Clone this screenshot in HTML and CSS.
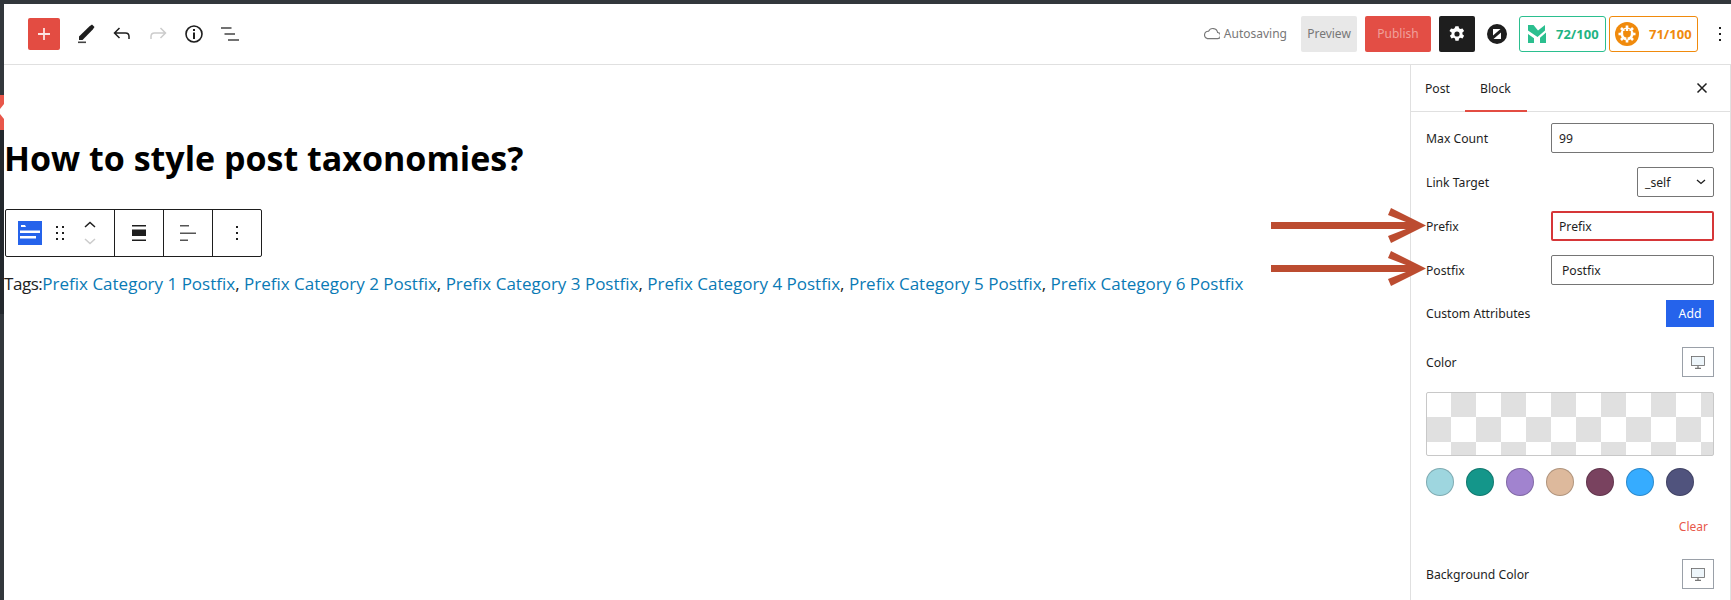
FILE: index.html
```html
<!DOCTYPE html>
<html lang="en">
<head>
<meta charset="UTF-8">
<meta name="viewport" content="width=device-width, initial-scale=1.0">
<title>How to style post taxonomies?</title>
<link rel="stylesheet" href="styles.css">
</head>
<body>

<!-- left admin rail bits that peek out next to the editor -->
<span class="rail-dark"></span>
<svg class="rail-mark" width="4" height="35" viewBox="0 0 4 35"><rect width="4" height="35" fill="#fff"/><path d="M0 0h4v9L0 14zM0 19l4 5v11H0z" fill="#e8574a"/></svg>

<div class="edit-frame">

  <header class="topbar">
    <div class="tools">
      <button class="add-btn" type="button">
        <svg width="16" height="16" viewBox="0 0 16 16"><path d="M8 2v12M2 8h12" stroke="#fbe4e2" stroke-width="1.8"/></svg>
      </button>
      <svg class="tool" width="24" height="24" viewBox="0 0 24 24"><path d="M5 14.500 15.500 4.200 18 2.500l2.500 2.400-1.700 2.600L8.500 18H5z" fill="#1e1e1e"/><path d="M4 20.300h8" stroke="#444" stroke-width="1.600"/></svg>
      <svg class="tool" width="24" height="24" viewBox="0 0 24 24"><path d="M9.500 6 4.500 11l5 5M5 11h10.500c2.300 0 3.500 1.500 3.500 3.600V17" fill="none" stroke="#1e1e1e" stroke-width="1.500"/></svg>
      <svg class="tool" width="24" height="24" viewBox="0 0 24 24"><path d="M14.500 6l5 5-5 5M19 11H8.500c-2.300 0-3.500 1.500-3.500 3.600V17" fill="none" stroke="#ccc" stroke-width="1.500"/></svg>
      <svg class="tool" width="24" height="24" viewBox="0 0 24 24"><circle cx="12" cy="12" r="8" fill="none" stroke="#1e1e1e" stroke-width="1.600"/><path d="M12 10.500V17" stroke="#1e1e1e" stroke-width="2"/><path d="M12 7v2" stroke="#1e1e1e" stroke-width="2"/></svg>
      <svg class="tool" width="24" height="24" viewBox="0 0 24 24"><path d="M3 6h10.500M6.500 12h10.500M10 18h11" stroke="#444" stroke-width="1.600"/></svg>
    </div>

    <div class="actions">
      <span class="autosave">
        <svg width="16" height="13" viewBox="1 2 14 11"><path d="M4 12h8.500a2.700 2.700 0 0 0 .4-5.400A4.200 4.200 0 0 0 5 5.500 3.300 3.300 0 0 0 4 12z" fill="none" stroke="#777" stroke-width="1"/></svg>
        Autosaving
      </span>
      <button class="preview-btn" type="button">Preview</button>
      <button class="publish-btn" type="button">Publish</button>
      <button class="settings-btn" type="button">
        <svg width="18" height="18" viewBox="0 0 16 16"><path fill-rule="evenodd" d="M6.600 1h2.800l.4 1.900 1.200.7 1.900-.6 1.400 2.400-1.500 1.300v1.500l1.500 1.300-1.400 2.400-1.900-.6-1.200.7-.4 1.900H6.600l-.4-1.900-1.200-.7-1.900.6-1.400-2.400 1.500-1.300V6.700L1.300 5.400 2.700 3l1.900.6 1.200-.7zM8 5.700a2.300 2.300 0 1 0 0 4.600 2.300 2.300 0 0 0 0-4.600z" fill="#fff"/></svg>
      </button>
      <svg class="zap" width="20" height="20" viewBox="0 0 20 20"><circle cx="10" cy="10" r="10" fill="#1e1e1e"/><path d="M6 5h7.500L6 11.500zM14 8.500V15H6.500z" fill="#fff"/></svg>
      <div class="score score-green">
        <svg width="18" height="20" viewBox="0 0 18 20"><path d="M0 1h5.500L10 6.500 17 1v5.500L9.500 13 0 6.500zM0 10l6 4.200V19H0zM18 8.500V19h-6v-5.200z" fill="#2bbf8f"/></svg>
        <span>72/100</span>
      </div>
      <div class="score score-orange">
        <svg width="24" height="24" viewBox="0 0 24 24"><circle cx="12" cy="12" r="12" fill="#f08a0c"/><path d="M12 3.500v4M12 16.500v4M3.500 12h4M16.500 12h4M6 6l3 3M15 15l3 3M18 6l-3 3M9 15l-3 3" stroke="#fff" stroke-width="2.600"/><circle cx="12" cy="12" r="6.500" fill="#fff"/><path d="M8.800 9.500h6.400v2.200a3.200 3.200 0 0 1-6.400 0zM10.200 7v2.500M13.800 7v2.500M12 14v3.500" fill="#f08a0c" stroke="#f08a0c" stroke-width="1.200"/></svg>
        <span>71/100</span>
      </div>
      <span class="more-dots"><i></i><i></i><i></i></span>
    </div>
  </header>

  <div class="workspace">
    <main class="canvas">
      <h1 class="post-title">How to style post taxonomies?</h1>

      <div class="block-toolbar">
        <div class="tb-group tb-first">
          <svg width="24" height="24" viewBox="0 0 24 24"><rect width="24" height="24" fill="#2563eb"/><path d="M3 4h4l1 2H3z" fill="#fff"/><rect x="2" y="9.500" width="20" height="2.500" fill="#fff"/><rect x="2" y="15" width="16" height="2.500" fill="#fff"/></svg>
          <svg class="drag" width="8" height="14" viewBox="0 0 8 14"><path d="M0 0h2v2H0zM6 0h2v2H6zM0 6h2v2H0zM6 6h2v2H6zM0 12h2v2H0zM6 12h2v2H6z" fill="#1e1e1e"/></svg>
          <svg class="mover" width="12" height="24" viewBox="0 0 12 24"><path d="M1 6l5-4.500L11 6" fill="none" stroke="#1e1e1e" stroke-width="1.500"/><path d="M1 18l5 4.500L11 18" fill="none" stroke="#ccc" stroke-width="1.500"/></svg>
        </div>
        <div class="tb-group tb-btn">
          <svg width="16" height="16" viewBox="0 0 16 16"><path d="M1 0h14v1.500H1zM1 4.500h14v6.500H1zM1 14.500h14V16H1z" fill="#1e1e1e"/></svg>
        </div>
        <div class="tb-group tb-btn">
          <svg width="16" height="16" viewBox="0 0 16 16"><path d="M0 0h9v1.500H0zM0 7.500h16V9H0zM0 14.500h8V16H0z" fill="#555"/></svg>
        </div>
        <div class="tb-group tb-last">
          <svg width="4" height="14" viewBox="0 0 4 14"><path d="M1 0h2v2H1zM1 6h2v2H1zM1 12h2v2H1z" fill="#1e1e1e"/></svg>
        </div>
      </div>

      <p class="tags"><span class="tags-label">Tags:</span><a href="#">Prefix Category 1 Postfix</a>, <a href="#">Prefix Category 2 Postfix</a>, <a href="#">Prefix Category 3 Postfix</a>, <a href="#">Prefix Category 4 Postfix</a>, <a href="#">Prefix Category 5 Postfix</a>, <a href="#">Prefix Category 6 Postfix</a></p>

      <!-- arrows drawn over the screenshot -->
      <svg class="note-arrow arrow-one" width="155" height="35" viewBox="0 0 155 35"><path d="M120 0l35 17.500L120 35l-3-7 18-7H0v-7h135L117 7z" fill="#bc4c30"/></svg>
      <svg class="note-arrow arrow-two" width="155" height="35" viewBox="0 0 155 35"><path d="M120 0l35 17.500L120 35l-3-7 18-7H0v-7h135L117 7z" fill="#bc4c30"/></svg>
    </main>

    <aside class="sidebar">
      <div class="side-tabs">
        <span class="tab">Post</span>
        <span class="tab active">Block</span>
        <svg class="close" width="12" height="12" viewBox="0 0 12 12"><path d="M1.500 1.500l9 9M10.500 1.500l-9 9" stroke="#1e1e1e" stroke-width="1.500"/></svg>
      </div>
      <div class="side-body">
        <div class="row">
          <label>Max Count</label>
          <input class="field" value="99">
        </div>
        <div class="row">
          <label>Link Target</label>
          <div class="select-box">_self
            <svg width="10" height="6" viewBox="0 0 10 6"><path d="M1 1l4 3.500L9 1" fill="none" stroke="#1e1e1e" stroke-width="1.300"/></svg>
          </div>
        </div>
        <div class="row">
          <label>Prefix</label>
          <input class="field field-red" value="Prefix">
        </div>
        <div class="row">
          <label>Postfix</label>
          <input class="field field-post" value="Postfix">
        </div>
        <div class="row attr-row">
          <label>Custom Attributes</label>
          <button class="add-attr" type="button">Add</button>
        </div>
        <div class="row color-head">
          <label>Color</label>
          <button class="device-btn" type="button">
            <svg width="14" height="13" viewBox="0 0 14 13"><rect x=".5" y=".5" width="13" height="9" fill="#eef6fb" stroke="#666" stroke-width=".8"/><path d="M7 10v2M4 12.300h6" stroke="#555"/></svg>
          </button>
        </div>
        <div class="checker"></div>
        <div class="swatches">
          <span class="dot dot1"></span>
          <span class="dot dot2"></span>
          <span class="dot dot3"></span>
          <span class="dot dot4"></span>
          <span class="dot dot5"></span>
          <span class="dot dot6"></span>
          <span class="dot dot7"></span>
        </div>
        <div class="clear-line"><a href="#">Clear</a></div>
        <div class="row bg-head">
          <label>Background Color</label>
          <button class="device-btn" type="button">
            <svg width="14" height="13" viewBox="0 0 14 13"><rect x=".5" y=".5" width="13" height="9" fill="#eef6fb" stroke="#666" stroke-width=".8"/><path d="M7 10v2M4 12.300h6" stroke="#555"/></svg>
          </button>
        </div>
      </div>
    </aside>
  </div>

</div>

</body>
</html>
```

FILE: styles.css
```css
* { box-sizing: border-box; }
html, body { margin:0; height:100%; overflow:hidden; }
body { background:#32373c; font-family:"Noto Sans", sans-serif; color:#1e1e1e; }

.rail-dark { position:absolute; left:0; top:130px; width:4px; height:184px; background:#23282d; }
.rail-mark { position:absolute; left:0; top:95px; display:block; }

.edit-frame { margin:4px 0 0 4px; height:596px; background:#fff; display:flex; flex-direction:column; }

/* top bar */
.topbar { height:61px; flex:none; display:flex; justify-content:space-between; align-items:center; border-bottom:1px solid #e0e0e0; padding:0 0 1px 24px; }
.tools { display:flex; align-items:center; }
.add-btn { width:32px; height:32px; border:none; border-radius:2px; background:#e34c42; padding:0; display:flex; align-items:center; justify-content:center; margin-right:14px; }
.tool { margin-right:12px; display:block; }
.actions { display:flex; align-items:center; }
.autosave { display:flex; align-items:center; gap:4px; font-size:12px; color:#777; margin-right:14px; }
.preview-btn { height:36px; width:56px; border:none; border-radius:2px; background:#e8e8e8; color:#777; font:12px "Noto Sans", sans-serif; padding:0; margin-right:8px; }
.publish-btn { height:36px; width:66px; border:none; border-radius:2px; background:#e34e45; color:#f0a09b; font:12px "Noto Sans", sans-serif; padding:0; margin-right:8px; }
.settings-btn { width:36px; height:36px; border:none; border-radius:2px; background:#1e1e1e; padding:0; display:flex; align-items:center; justify-content:center; margin-right:12px; }
.zap { margin-right:12px; }
.score { height:36px; display:flex; align-items:center; border-radius:3px; font-size:13px; font-weight:700; background:#fff; gap:10px; }
.score-green { width:87px; border:1px solid #2bbf8f; color:#1fb483; padding-left:8px; margin-right:3px; }
.score-orange { width:89px; border:1px solid #f08a0c; color:#f08a0c; padding-left:5px; }
.more-dots { display:flex; flex-direction:column; gap:4px; margin:0 10px 0 21px; }
.more-dots i { display:block; width:2px; height:2px; background:#1e1e1e; }

.workspace { flex:1; display:flex; min-height:0; }
.canvas { flex:1; position:relative; background:#fff; padding-top:70px; }

.post-title { margin:0; font:700 34px/46px "Open Sans", sans-serif; color:#000; }

.block-toolbar { display:flex; width:257px; height:48px; margin:28px 0 0 1px; border:1px solid #1e1e1e; border-radius:2px; background:#fff; }
.tb-group { height:100%; display:flex; align-items:center; border-right:1px solid #1e1e1e; }
.tb-first { width:109px; padding-left:12px; }
.drag { margin-left:14px; }
.mover { margin-left:20px; }
.tb-btn { width:49px; justify-content:center; }
.tb-last { flex:1; justify-content:center; border-right:none; }

.tags { margin:14px 0 0; font:17px/26px "Open Sans", sans-serif; color:#1e1e1e; white-space:nowrap; }
.tags-label { letter-spacing:-.45px; }
.tags a { color:#0a7ab5; text-decoration:none; }

.note-arrow { position:absolute; left:1267px; }
.arrow-one { top:143px; }
.arrow-two { top:186px; }

/* right sidebar */
.sidebar { width:321px; flex:none; border-left:1px solid #e0e0e0; border-right:1px solid #e0e0e0; font-size:12.2px; }
.side-tabs { height:47px; display:flex; align-items:center; padding-left:14px; border-bottom:1px solid #e0e0e0; position:relative; }
.tab { height:47px; line-height:47px; padding-right:15px; }
.tab.active { padding:0 15px; width:62px; border-bottom:2px solid #e34c42; }
.close { position:absolute; right:22px; top:17px; }
.side-body { padding:11px 16px 0 15px; }
.row { display:flex; justify-content:space-between; align-items:center; margin-bottom:14px; }
.field { width:163px; height:30px; border:1px solid #757575; border-radius:2px; padding:0 7px; font:12.2px "Noto Sans", sans-serif; color:#1e1e1e; background:#fff; outline:none; }
.field-red { border:2px solid #d63638; padding:0 6px; }
.field-post { padding:0 10px; }
.select-box { width:77px; height:30px; border:1px solid #757575; border-radius:2px; padding:0 7px; display:flex; align-items:center; justify-content:space-between; }
.attr-row { margin-bottom:20px; margin-top:15px; }
.add-attr { width:48px; height:27px; border:none; background:#2563eb; color:#fff; font:12.2px "Noto Sans", sans-serif; padding:0; }
.color-head { margin-bottom:15px; }
.device-btn { width:32px; height:30px; background:#fff; border:1px solid #9aa0a8; padding:0; display:flex; align-items:center; justify-content:center; }
.checker { height:64px; border:1px solid #c8c8c8; border-radius:2px; background-color:#fff; background-image:conic-gradient(#e0e0e0 25%, #fff 0 50%, #e0e0e0 0 75%, #fff 0); background-size:50px 50px; background-position:-1px -1px; }
.swatches { display:flex; gap:12px; margin-top:12px; }
.dot { width:28px; height:28px; border-radius:50%; border:1px solid rgba(0,0,0,.2); }
.dot1 { background:#9ed6df; }
.dot2 { background:#14968a; }
.dot3 { background:#a183cf; }
.dot4 { background:#ddb99c; }
.dot5 { background:#79425f; }
.dot6 { background:#36acff; }
.dot7 { background:#50537d; }
.clear-line { text-align:right; margin-top:22px; padding-right:6px; font-size:12px; line-height:18px; }
.clear-line a { color:#e8574a; text-decoration:none; }
.bg-head { margin-top:23px; }
```
